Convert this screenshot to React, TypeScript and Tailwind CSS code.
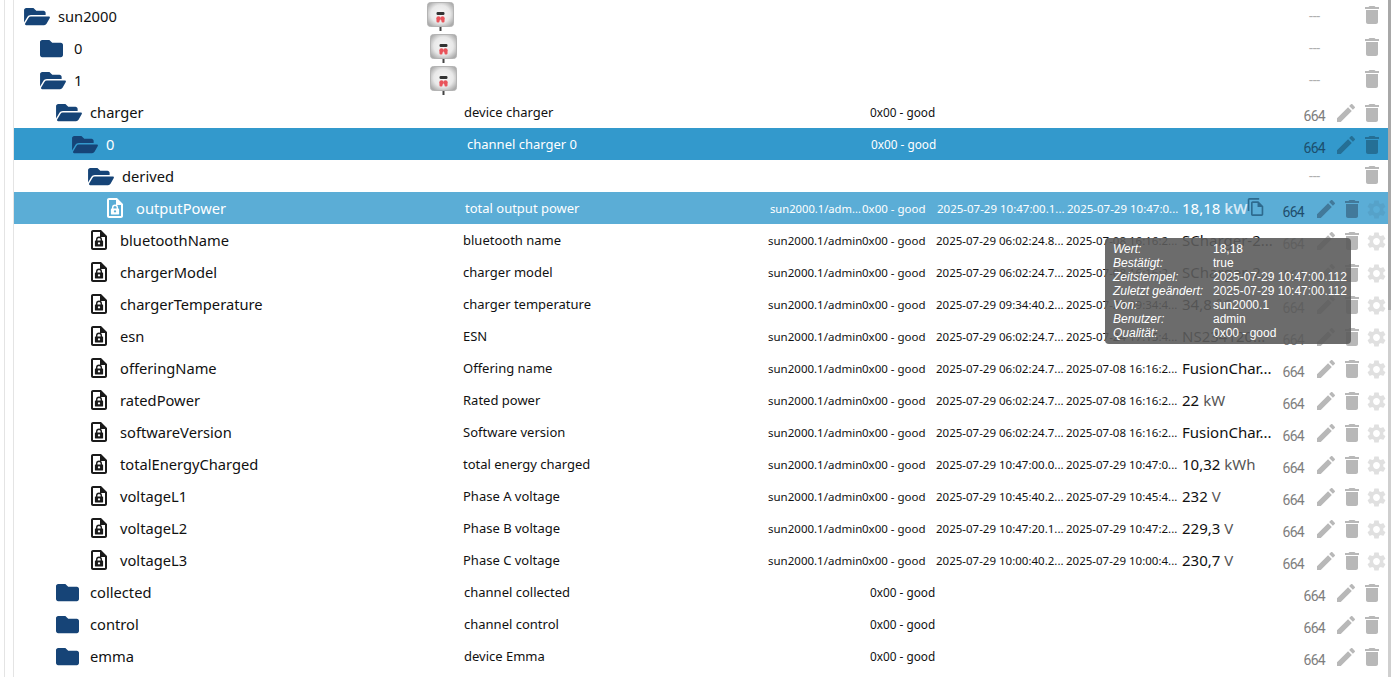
import { FaFolder, FaFolderOpen } from "react-icons/fa";

const SEGOE = "font-['Noto_Sans',sans-serif]";

const FileLock = ({ className }: { className: string }) => (
  <svg viewBox="0 0 16 20" className={className} fill="currentColor">
    <path d="M10 0H2C.9 0 .01.9.01 2L0 18c0 1.100.89 2 1.990 2H14c1.100 0 2-.9 2-2V6l-6-6zm4 18H2V2h7v5h5v11z" />
    <path
      fillRule="evenodd"
      d="M5 10.500V9.600a3 3 0 0 1 6 0v.9h.6c.3 0 .5.2.5.5v5c0 .3-.2.5-.5.5H4.400c-.3 0-.5-.2-.5-.5v-5c0-.3.2-.5.5-.5H5zm1.400 0h3.200V9.600a1.600 1.600 0 0 0-3.200 0v.9zM8 12.200a1.100 1.100 0 0 0-.5 2.100v.2h1v-.2a1.100 1.100 0 0 0-.5-2.100z"
    />
  </svg>
);

const Pencil = ({ className }: { className: string }) => (
  <svg viewBox="3 3 18 18" className={className} fill="currentColor">
    <path d="M3 17.250V21h3.750L17.810 9.940l-3.750-3.750L3 17.250zM20.710 7.040c.39-.39.39-1.020 0-1.410l-2.340-2.340c-.39-.39-1.020-.39-1.410 0l-1.830 1.830 3.750 3.750 1.830-1.830z" />
  </svg>
);

const Trash = ({ className }: { className: string }) => (
  <svg viewBox="5 3 14 18" className={className} fill="currentColor">
    <path d="M6 19c0 1.100.9 2 2 2h8c1.100 0 2-.9 2-2V7H6v12zM19 4h-3.500l-1-1h-5l-1 1H5v2h14V4z" />
  </svg>
);

const Gear = ({ className }: { className: string }) => (
  <svg viewBox="2 2 20 20" className={className} fill="currentColor">
    <path d="M19.140 12.940c.04-.3.060-.61.060-.94 0-.32-.02-.64-.07-.94l2.030-1.580c.18-.14.230-.41.120-.61l-1.920-3.320c-.12-.22-.37-.29-.59-.22l-2.390.96c-.5-.38-1.030-.7-1.620-.94l-.36-2.540c-.04-.24-.24-.41-.48-.41h-3.840c-.24 0-.43.170-.47.410l-.36 2.540c-.59.240-1.130.57-1.620.94l-2.390-.96c-.22-.08-.47 0-.59.220L2.740 8.870c-.12.21-.08.47.120.61l2.030 1.580c-.05.3-.09.63-.09.94s.02.64.07.94l-2.030 1.580c-.18.140-.23.410-.12.610l1.920 3.320c.12.220.37.290.59.220l2.390-.96c.5.38 1.030.7 1.620.94l.36 2.540c.05.240.24.410.48.410h3.840c.24 0 .44-.17.470-.41l.36-2.540c.59-.24 1.130-.56 1.620-.94l2.390.96c.22.080.47 0 .59-.22l1.920-3.320c.12-.22.070-.47-.12-.61l-2.010-1.580zM12 15.600c-1.980 0-3.600-1.620-3.600-3.600s1.620-3.600 3.600-3.600 3.600 1.620 3.600 3.600-1.620 3.600-3.600 3.600z" />
  </svg>
);

const Copy = ({ className }: { className: string }) => (
  <svg viewBox="2 1 19 22" className={className} fill="currentColor">
    <path d="M16 1H4c-1.100 0-2 .9-2 2v14h2V3h12V1zm-1 4H8c-1.100 0-1.990.9-1.990 2L6 21c0 1.100.89 2 1.990 2H19c1.100 0 2-.9 2-2V11l-6-6zM8 21V7h6v5h5v9H8z" />
  </svg>
);

// little wallbox picture shown in the sun2000 rows
const Wallbox = ({ id }: { id: string }) => (
  <svg viewBox="0 0 27 30" className="h-[30px] w-[27px]">
    <defs>
      <radialGradient id={id} cx="50%" cy="48%" r="62%">
        <stop offset="0%" stopColor="#f8f8f8" />
        <stop offset="60%" stopColor="#e8e8e8" />
        <stop offset="100%" stopColor="#a9a9a9" />
      </radialGradient>
    </defs>
    <rect x="0.500" y="1.500" width="26" height="24" rx="3" fill={`url(#${id})`} stroke="#b4b4b4" />
    <rect x="9.500" y="11" width="8" height="3" rx="1.200" fill="#333" />
    <circle cx="11.500" cy="17.500" r="2.200" fill="#e9545b" />
    <circle cx="15.500" cy="17.500" r="2.200" fill="#e9545b" />
    <rect x="9.500" y="18" width="3" height="3.500" rx="1" fill="#e9545b" />
    <rect x="14.500" y="18" width="3" height="3.500" rx="1" fill="#e9545b" />
    <rect x="12.500" y="26" width="2" height="4" fill="#444" />
  </svg>
);

type Row = {
  name: string;
  indent: number;
  kind: "open" | "closed" | "state";
  nameW: string;
  desc?: string;
  img?: boolean;
  source?: string;
  quality?: boolean;
  ts?: string;
  lc?: string;
  value?: string;
  unit?: string;
  rights: string;
  tone?: "selected" | "hover";
};

const rows: Row[] = [
  { name: "sun2000", indent: 10, kind: "open", nameW: "w-[413px]", img: true, rights: "---" },
  { name: "0", indent: 26, kind: "closed", nameW: "w-[416px]", img: true, rights: "---" },
  { name: "1", indent: 26, kind: "open", nameW: "w-[416px]", img: true, rights: "---" },
  { name: "charger", indent: 42, kind: "open", nameW: "w-[450px]", desc: "device charger", quality: true, rights: "664" },
  { name: "0", indent: 58, kind: "open", nameW: "w-[453px]", desc: "channel charger 0", quality: true, rights: "664", tone: "selected" },
  { name: "derived", indent: 74, kind: "open", nameW: "w-[450px]", rights: "---" },
  { name: "outputPower", indent: 93, kind: "state", nameW: "w-[451px]", desc: "total output power", source: "sun2000.1/adm...", quality: true, ts: "2025-07-29 10:47:00.1...", lc: "2025-07-29 10:47:0...", value: "18,18", unit: "kW", rights: "664", tone: "hover" },
  { name: "bluetoothName", indent: 77, kind: "state", nameW: "w-[449px]", desc: "bluetooth name", source: "sun2000.1/admin", quality: true, ts: "2025-07-29 06:02:24.8...", lc: "2025-07-08 16:16:2...", value: "SCharger-2...", rights: "664" },
  { name: "chargerModel", indent: 77, kind: "state", nameW: "w-[449px]", desc: "charger model", source: "sun2000.1/admin", quality: true, ts: "2025-07-29 06:02:24.7...", lc: "2025-07-08 16:16:2...", value: "SCharger-2...", rights: "664" },
  { name: "chargerTemperature", indent: 77, kind: "state", nameW: "w-[449px]", desc: "charger temperature", source: "sun2000.1/admin", quality: true, ts: "2025-07-29 09:34:40.2...", lc: "2025-07-29 09:34:4...", value: "34,8", unit: "°C", rights: "664" },
  { name: "esn", indent: 77, kind: "state", nameW: "w-[449px]", desc: "ESN", source: "sun2000.1/admin", quality: true, ts: "2025-07-29 06:02:24.7...", lc: "2025-07-24 17:15:4...", value: "NS234120...", rights: "664" },
  { name: "offeringName", indent: 77, kind: "state", nameW: "w-[449px]", desc: "Offering name", source: "sun2000.1/admin", quality: true, ts: "2025-07-29 06:02:24.7...", lc: "2025-07-08 16:16:2...", value: "FusionChar...", rights: "664" },
  { name: "ratedPower", indent: 77, kind: "state", nameW: "w-[449px]", desc: "Rated power", source: "sun2000.1/admin", quality: true, ts: "2025-07-29 06:02:24.7...", lc: "2025-07-08 16:16:2...", value: "22", unit: "kW", rights: "664" },
  { name: "softwareVersion", indent: 77, kind: "state", nameW: "w-[449px]", desc: "Software version", source: "sun2000.1/admin", quality: true, ts: "2025-07-29 06:02:24.7...", lc: "2025-07-08 16:16:2...", value: "FusionChar...", rights: "664" },
  { name: "totalEnergyCharged", indent: 77, kind: "state", nameW: "w-[449px]", desc: "total energy charged", source: "sun2000.1/admin", quality: true, ts: "2025-07-29 10:47:00.0...", lc: "2025-07-29 10:47:0...", value: "10,32", unit: "kWh", rights: "664" },
  { name: "voltageL1", indent: 77, kind: "state", nameW: "w-[449px]", desc: "Phase A voltage", source: "sun2000.1/admin", quality: true, ts: "2025-07-29 10:45:40.2...", lc: "2025-07-29 10:45:4...", value: "232", unit: "V", rights: "664" },
  { name: "voltageL2", indent: 77, kind: "state", nameW: "w-[449px]", desc: "Phase B voltage", source: "sun2000.1/admin", quality: true, ts: "2025-07-29 10:47:20.1...", lc: "2025-07-29 10:47:2...", value: "229,3", unit: "V", rights: "664" },
  { name: "voltageL3", indent: 77, kind: "state", nameW: "w-[449px]", desc: "Phase C voltage", source: "sun2000.1/admin", quality: true, ts: "2025-07-29 10:00:40.2...", lc: "2025-07-29 10:00:4...", value: "230,7", unit: "V", rights: "664" },
  { name: "collected", indent: 42, kind: "closed", nameW: "w-[450px]", desc: "channel collected", quality: true, rights: "664" },
  { name: "control", indent: 42, kind: "closed", nameW: "w-[450px]", desc: "channel control", quality: true, rights: "664" },
  { name: "emma", indent: 42, kind: "closed", nameW: "w-[450px]", desc: "device Emma", quality: true, rights: "664" },
];

const TreeRow = ({ row, index }: { row: Row; index: number }) => {
  const sel = row.tone === "selected";
  const hov = row.tone === "hover";
  const tint = sel || hov;
  const isState = row.kind === "state";
  const noRights = row.rights === "---";
  const rowBg = sel ? "bg-[#3399cc] text-white" : hov ? "bg-[#5badd6] text-white" : "text-[#111]";
  const action = tint ? (sel ? "text-[#256f95]" : "text-[#42799a]") : "text-[#b8b8b8]";

  return (
    <div className={`relative flex h-8 shrink-0 items-center ${SEGOE} ${rowBg}`}>
      <div className={`flex h-full shrink-0 items-center ${row.nameW}`}>
        <div className="shrink-0" style={{ width: row.indent }} />
        {row.kind === "open" && <FaFolderOpen className="h-[23px] w-[26px] shrink-0 text-[#164477]" />}
        {row.kind === "closed" && <FaFolder className="h-[23px] w-[23px] shrink-0 text-[#164477]" />}
        {row.kind === "state" && <FileLock className={`h-5 w-4 shrink-0 ${hov ? "text-white" : "text-[#1a1a1a]"}`} />}
        <span className={`text-[14.7px] leading-none ${row.kind === "open" ? "ml-2" : row.kind === "closed" ? "ml-[11px]" : "ml-[13px]"}`}>
          {row.name}
        </span>
      </div>

      {row.img ? (
        <div className="flex h-full items-center"><Wallbox id={`wallbox-${index}`} /></div>
      ) : (
        <div className={`mt-[2px] shrink-0 whitespace-nowrap text-[13px] ${isState ? "w-[305px]" : sel ? "w-[404px]" : "w-[406px]"}`}>{row.desc}</div>
      )}

      {isState && (
        <div className={`mt-[2px] shrink-0 overflow-hidden whitespace-nowrap ${hov ? "w-[92px] text-[11.2px]" : "w-[94px] text-[11.5px]"}`}>{row.source}</div>
      )}
      {row.quality && (
        <div className={`mt-[2px] shrink-0 whitespace-nowrap ${isState ? "text-[11.5px]" : "text-[11.8px]"} ${hov ? "w-[75px]" : "w-[74px]"}`}>0x00 - good</div>
      )}

      {isState && (
        <>
          <div className="mt-[2px] w-[130px] shrink-0 whitespace-nowrap text-[11.5px]">{row.ts}</div>
          <div className={`mt-[2px] shrink-0 whitespace-nowrap text-[11.5px] ${hov ? "w-[115px]" : "w-[116px]"}`}>{row.lc}</div>
          <div className="relative w-[100px] shrink-0 whitespace-nowrap text-[15px]">
            {row.value}
            {row.unit && <span className={`ml-1 ${tint ? "font-semibold text-[#d6e9f5]" : "text-[#555]"}`}>{row.unit}</span>}
            {hov && <Copy className="absolute left-[65px] top-[1px] h-[18px] w-[17px] text-[#2e6a8e]" />}
          </div>
        </>
      )}

      <div className={`ml-auto flex h-full items-center ${noRights ? "pb-[2px]" : "pt-[2px]"}`}>
        {noRights ? (
          <span className="mr-[35px] mt-[2px] font-['Roboto',sans-serif] text-[14px] tracking-[-0.2px] text-[#b0b0b0]">---</span>
        ) : (
          <>
            <span className={`mt-[6px] font-['Roboto',sans-serif] text-[14px] tracking-[-0.7px] ${sel ? "text-[#1c4f6e]" : hov ? "text-[#1f4d6d]" : "text-[#7e7e7e]"}`}>664</span>
            <Pencil className={`h-[18px] w-[18px] ${isState ? "ml-[13px]" : "ml-[12px]"} ${action}`} />
          </>
        )}
        <Trash className={`ml-[10px] h-[18px] w-[14px] ${action}`} />
        {isState ? (
          <Gear className={`ml-[8px] mr-[2px] h-[19px] w-[19px] ${hov ? "text-[#56a2c9]" : "text-[#e0e0e0]"}`} />
        ) : (
          <div className="w-[9px]" />
        )}
      </div>
    </div>
  );
};

const tooltip = [
  ["Wert:", "18,18"],
  ["Bestätigt:", "true"],
  ["Zeitstempel:", "2025-07-29 10:47:00.112"],
  ["Zuletzt geändert:", "2025-07-29 10:47:00.112"],
  ["Von:", "sun2000.1"],
  ["Benutzer:", "admin"],
  ["Qualität:", "0x00 - good"],
];

export default function App() {
  return (
    <div className="relative flex h-[677px] w-[1391px] overflow-hidden bg-white">
      <div className="w-[4px] shrink-0" />
      <div className="w-[10px] shrink-0 border-x border-[#e4e4e4]" />
      <div className="flex w-[1374px] shrink-0 flex-col">
        {rows.map((r, i) => (
          <TreeRow key={i} row={r} index={i} />
        ))}
      </div>
      <div className="flex w-[3px] shrink-0 flex-col">
        <div className="h-[310px] bg-[#a8a8a8]" />
        <div className="flex-1 bg-[#cfcfcf]" />
      </div>

      <div className="absolute left-[1105px] top-[238px] h-[106px] w-[246px] rounded bg-[#5c5c5c]/90 pl-2 pt-[4px] font-['Liberation_Sans',sans-serif] text-[12px] leading-[14px] text-white">
        {tooltip.map(([k, v]) => (
          <div key={k} className="flex whitespace-nowrap">
            <span className="w-[100px] shrink-0 italic">{k}</span>
            <span>{v}</span>
          </div>
        ))}
      </div>
    </div>
  );
}
